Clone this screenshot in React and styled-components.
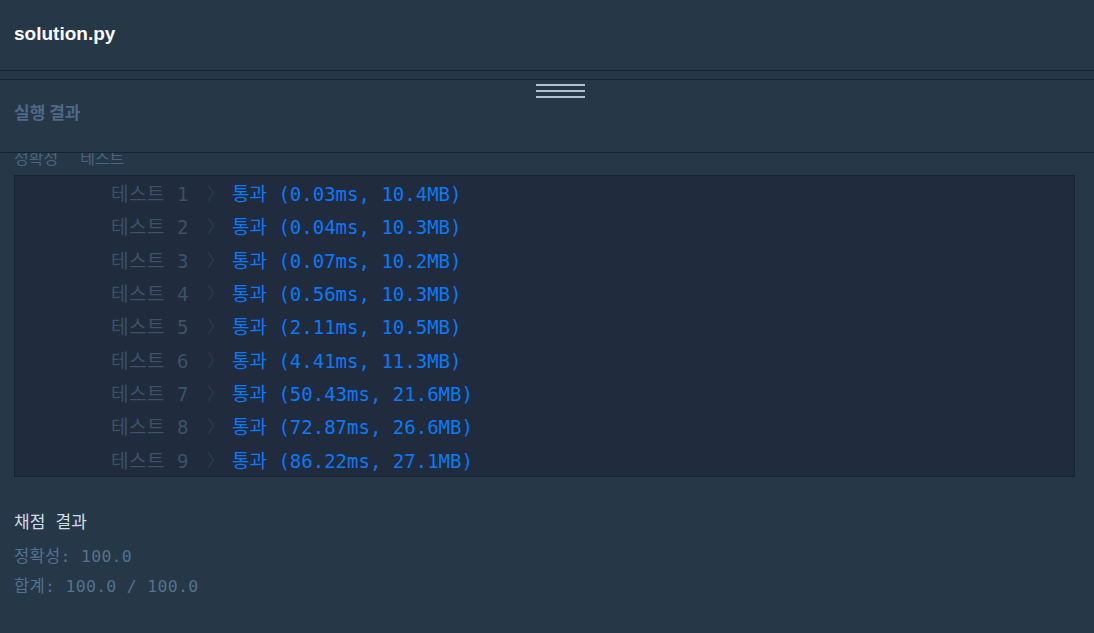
import React from 'react';
import styled, { createGlobalStyle } from 'styled-components';

const GlobalStyle = createGlobalStyle`
  html, body {
    margin: 0;
    padding: 0;
    background: #263747;
    overflow: hidden;
  }
  * {
    box-sizing: border-box;
  }
`;

const results = [
  { n: 1, time: '0.03ms', mem: '10.4MB' },
  { n: 2, time: '0.04ms', mem: '10.3MB' },
  { n: 3, time: '0.07ms', mem: '10.2MB' },
  { n: 4, time: '0.56ms', mem: '10.3MB' },
  { n: 5, time: '2.11ms', mem: '10.5MB' },
  { n: 6, time: '4.41ms', mem: '11.3MB' },
  { n: 7, time: '50.43ms', mem: '21.6MB' },
  { n: 8, time: '72.87ms', mem: '26.6MB' },
  { n: 9, time: '86.22ms', mem: '27.1MB' },
];

const mono = `"DejaVu Sans Mono", "Noto Sans CJK KR", monospace`;

const App = () => (
  <Page>
    <GlobalStyle />
    <Page.Header>
      <Page.FileName>solution.py</Page.FileName>
    </Page.Header>
    <Page.Gutter />
    <Page.Panel>
      <Page.Handle>
        <span />
        <span />
        <span />
      </Page.Handle>
      <Page.PanelTitle>실행 결과</Page.PanelTitle>
    </Page.Panel>
    <Page.Scroll>
      <Page.Content>
        <Page.SectionLabel>
          <span>정확성</span>
          <span>테스트</span>
        </Page.SectionLabel>
        <Page.Table>
          {results.map(({ n, time, mem }) => (
            <Page.Row key={n}>
              <Page.TestName>테스트 {n}</Page.TestName>
              <Page.Arrow>〉</Page.Arrow>
              <Page.Passed>
                통과 ({time}, {mem})
              </Page.Passed>
            </Page.Row>
          ))}
        </Page.Table>
        <Page.Summary>
          <Page.SummaryTitle>채점 결과</Page.SummaryTitle>
          <Page.SummaryLine>정확성: 100.0</Page.SummaryLine>
          <Page.SummaryLine>합계: 100.0 / 100.0</Page.SummaryLine>
        </Page.Summary>
      </Page.Content>
    </Page.Scroll>
  </Page>
);

const Page = styled.div`
  display: flex;
  flex-direction: column;
  width: 1094px;
  height: 633px;
  background: #263747;
  overflow: hidden;
`;

Page.Header = styled.div`
  display: flex;
  align-items: center;
  height: 71px;
  padding: 0 14px 2px;
  border-bottom: 1px solid #172334;
`;

Page.FileName = styled.h1`
  margin: 0;
  font-family: "Liberation Sans", Arial, sans-serif;
  font-weight: bold;
  font-size: 19px;
  color: #ffffff;
`;

Page.Gutter = styled.div`
  height: 8px;
`;

Page.Panel = styled.div`
  position: relative;
  display: flex;
  align-items: center;
  height: 74px;
  padding: 0 14px 9px;
  border-top: 1px solid #172334;
  border-bottom: 1px solid #172334;
`;

Page.Handle = styled.div`
  position: absolute;
  top: 4px;
  left: 536px;
  display: flex;
  flex-direction: column;
  gap: 4px;

  span {
    display: block;
    width: 49px;
    height: 2px;
    background: #b4c0cc;
  }
`;

Page.PanelTitle = styled.h2`
  margin: 0;
  font-family: "Noto Sans CJK KR", sans-serif;
  font-weight: bold;
  font-size: 17px;
  color: #4f6a86;
`;

Page.Scroll = styled.div`
  flex: 1;
  overflow: hidden;
`;

Page.Content = styled.div`
  margin-top: -6px;
  padding: 0 19px 0 14px;
`;

Page.SectionLabel = styled.div`
  display: flex;
  gap: 22px;
  height: 24px;
  line-height: 24px;
  margin-bottom: 4px;
  font-family: ${mono};
  font-size: 16px;
  color: #4a6580;
`;

Page.Table = styled.div`
  background: #202b3d;
  border: 1px solid #172334;
`;

Page.Row = styled.div`
  display: flex;
  align-items: center;
  height: 33.33px;
  padding-left: 96px;
  font-family: ${mono};
  font-size: 19px;
  white-space: pre;
`;

Page.TestName = styled.span`
  width: 96px;
  color: #3e5166;
  letter-spacing: 0.5px;
`;

Page.Arrow = styled.span`
  width: 25px;
  color: #2c3c50;
  font-family: "Noto Sans CJK KR", sans-serif;
  font-size: 17px;
`;

Page.Passed = styled.span`
  color: #0c79f7;
`;

Page.Summary = styled.div`
  display: flex;
  flex-direction: column;
  padding-top: 32px;
  font-family: ${mono};
  font-size: 17px;
`;

Page.SummaryTitle = styled.div`
  height: 26px;
  line-height: 26px;
  color: #d2dbe4;
  margin-bottom: 7px;
`;

Page.SummaryLine = styled.div`
  height: 30px;
  line-height: 30px;
  font-size: 16.5px;
  letter-spacing: 0.3px;
  color: #53728f;
`;

export default App;
